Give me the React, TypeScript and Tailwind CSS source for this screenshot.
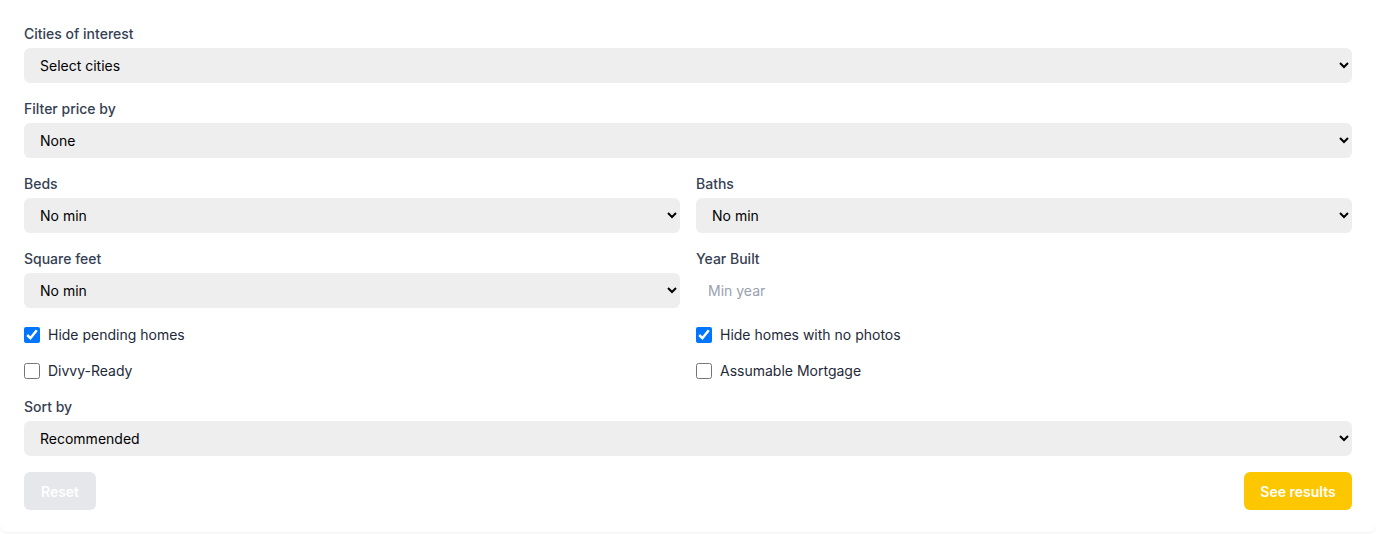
import React from "react";

const selectCls =
  "block w-full h-[35px] rounded-md bg-[#eeeeee] pl-3 pr-2 text-[14px] text-black outline-none border-0";

function Field({ label, children }: { label: string; children: React.ReactNode }) {
  return (
    <div className="flex flex-col gap-1">
      <label className="text-[14px] leading-5 font-medium text-gray-700">{label}</label>
      {children}
    </div>
  );
}

function Sel({ value }: { value: string }) {
  return (
    <select className={selectCls} defaultValue={value}>
      <option>{value}</option>
    </select>
  );
}

function Check({ label, checked }: { label: string; checked?: boolean }) {
  return (
    <label className="flex items-center gap-2 h-5 text-[14px] leading-5 text-gray-800">
      <input type="checkbox" defaultChecked={checked} className="w-4 h-4 m-0" />
      {label}
    </label>
  );
}

export default function App() {
  return (
    <div
      className="w-[1376px] h-[534px] bg-white"
      style={{ fontFamily: "Inter, 'Noto Sans', sans-serif" }}
    >
      <div className="bg-white rounded-b-lg shadow-[0_1px_3px_rgba(0,0,0,0.06)] px-6 pt-6 pb-[22px] flex flex-col gap-4">
        <Field label="Cities of interest">
          <Sel value="Select cities" />
        </Field>
        <Field label="Filter price by">
          <Sel value="None" />
        </Field>
        <div className="grid grid-cols-2 gap-x-4 gap-y-4">
          <Field label="Beds">
            <Sel value="No min" />
          </Field>
          <Field label="Baths">
            <Sel value="No min" />
          </Field>
          <Field label="Square feet">
            <Sel value="No min" />
          </Field>
          <Field label="Year Built">
            <input
              placeholder="Min year"
              className="block w-full h-[35px] rounded-md bg-white px-3 text-[14px] text-black placeholder:text-gray-400 outline-none border-0"
            />
          </Field>
        </div>
        <div className="grid grid-cols-2 gap-x-4 gap-y-4 pt-px">
          <Check label="Hide pending homes" checked />
          <Check label="Hide homes with no photos" checked />
          <Check label="Divvy-Ready" />
          <Check label="Assumable Mortgage" />
        </div>
        <Field label="Sort by">
          <Sel value="Recommended" />
        </Field>
        <div className="flex justify-between">
          <button className="h-[38px] w-[72px] rounded-md bg-gray-200 text-white text-[14px] font-semibold">
            Reset
          </button>
          <button className="h-[38px] w-[108px] rounded-md bg-yellow-400 text-white text-[14px] font-semibold">
            See results
          </button>
        </div>
      </div>
    </div>
  );
}
